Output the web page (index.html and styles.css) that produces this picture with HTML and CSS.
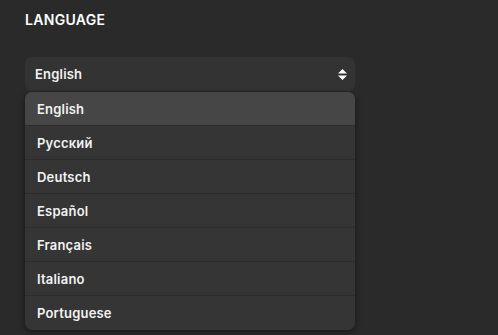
FILE: index.html
```html
<!DOCTYPE html>
<html>
<head>
<meta charset="utf-8">
<link rel="stylesheet" href="styles.css">
</head>
<body>
<div class="panel">
  <h2 class="title">LANGUAGE</h2>
  <div class="select">
    <span class="value">English</span>
    <svg class="sort" width="9" height="11" viewBox="0 0 9 11"><path d="M4.5 0 L9 4.5 H0 Z M0 6.5 H9 L4.5 11 Z" fill="#fff"/></svg>
  </div>
  <ul class="menu">
    <li class="item active">English</li>
    <li class="item">Русский</li>
    <li class="item">Deutsch</li>
    <li class="item">Español</li>
    <li class="item">Français</li>
    <li class="item">Italiano</li>
    <li class="item">Portuguese</li>
  </ul>
</div>
</body>
</html>
```
FILE: styles.css
```css
html, body {
  margin: 0;
  padding: 0;
  background: #2a2a2a;
  height: 100%;
}
body {
  font-family: "Inter", "DejaVu Sans", sans-serif;
  color: #f2f2f2;
}
.panel {
  padding: 12px 0 0 25px;
  width: 330px;
}
.title {
  margin: 0;
  font-size: 14px;
  font-weight: 600;
  letter-spacing: 0.3px;
  line-height: 16px;
  color: #fff;
}
.select {
  margin-top: 29px;
  height: 34px;
  background: #333333;
  border-radius: 7px;
  display: flex;
  align-items: center;
  justify-content: space-between;
  padding: 0 8px 0 10px;
}
.value {
  font-size: 13px;
  font-weight: 600;
  letter-spacing: 0.2px;
}
.sort {
  display: block;
}
.menu {
  list-style: none;
  margin: 1px 0 0 0;
  padding: 0;
  background: #353535;
  border-radius: 7px;
  overflow: hidden;
  box-shadow: 0 2px 6px rgba(0,0,0,0.45);
}
.item {
  height: 33px;
  border-bottom: 1px solid #2c2c2c;
  display: flex;
  align-items: center;
  padding-left: 12px;
  font-size: 13px;
  font-weight: 600;
  letter-spacing: 0.2px;
}
.item:last-child {
  border-bottom: none;
  height: 34px;
}
.item.active {
  background: #464646;
}
```
